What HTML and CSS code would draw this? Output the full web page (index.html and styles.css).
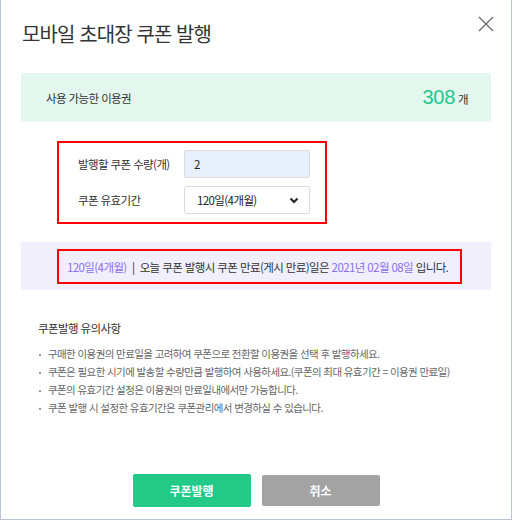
FILE: index.html
```html
<!DOCTYPE html>
<html lang="ko">
<head>
    <meta charset="UTF-8">
    <title>모바일 초대장 쿠폰 발행</title>
    <link rel="stylesheet" href="styles.css">
</head>
<body>

<div class="popup">
    <div class="popup-head">
        <h2>모바일 초대장 쿠폰 발행</h2>
        <button class="btn-close" type="button" aria-label="닫기">
            <svg width="16" height="16" viewBox="0 0 16 16"><path d="M1 1L15 15M15 1L1 15" stroke="#666" stroke-width="1.2" fill="none"/></svg>
        </button>
    </div>

    <div class="ticket-box">
        <span>사용 가능한 이용권</span>
        <span class="ticket-count"><span class="num">308</span> 개</span>
    </div>

    <div class="form-area">
        <div class="form-wrap">
            <div class="form-row">
                <label for="couponCount">발행할 쿠폰 수량(개)</label>
                <input type="text" id="couponCount" class="input-count" value="2">
            </div>
            <div class="form-row">
                <label for="couponPeriod">쿠폰 유효기간</label>
                <div class="select-box">
                    <span id="couponPeriod">120일(4개월)</span>
                    <svg width="10" height="7" viewBox="0 0 10 7"><path d="M1.5 1.5L5 5L8.5 1.5" stroke="#222" stroke-width="2" fill="none"/></svg>
                </div>
            </div>
        </div>
    </div>

    <div class="expire-band">
        <p class="expire-text"><em>120일(4개월)</em>  |  오늘 쿠폰 발행시 쿠폰 만료(게시 만료)일은 <em>2021년 02월 08일</em> 입니다.</p>
    </div>

    <div class="notice">
        <h3>쿠폰발행 유의사항</h3>
        <ul>
            <li>구매한 이용권의 만료일을 고려하여 쿠폰으로 전환할 이용권을 선택 후 발행하세요.</li>
            <li>쿠폰은 필요한 시기에 발송할 수량만큼 발행하여 사용하세요.(쿠폰의 최대 유효기간 = 이용권 만료일)</li>
            <li>쿠폰의 유효기간 설정은 이용권의 만료일내에서만 가능합니다.</li>
            <li>쿠폰 발행 시 설정한 유효기간은 쿠폰관리에서 변경하실 수 있습니다.</li>
        </ul>
    </div>

    <div class="btn-area">
        <button type="button" class="btn btn-green">쿠폰발행</button>
        <button type="button" class="btn btn-gray">취소</button>
    </div>
</div>

</body>
</html>
```

FILE: styles.css
```css
body {
    margin: 0;
    padding: 0;
    background-color: #fff;
    font-family: "Noto Sans CJK KR", "Noto Sans", sans-serif;
    color: #333;
}

.popup {
    box-sizing: border-box;
    width: 512px;
    height: 520px;
    padding: 0 20px;
    border: 1px solid #b9c5d2;
    border-top: none;
    display: flex;
    flex-direction: column;
}

.popup-head {
    display: flex;
    justify-content: space-between;
    align-items: flex-start;
    height: 73px;
}

.popup-head h2 {
    margin: 20px 0 0 1px;
    font-size: 20px;
    font-weight: 400;
    line-height: 28px;
    color: #333;
    letter-spacing: -0.9px;
}

.btn-close {
    margin: 16px -3px 0 0;
    padding: 0;
    border: none;
    background: none;
    width: 16px;
    height: 16px;
}

.ticket-box {
    height: 49px;
    padding: 0 23px 0 25px;
    background-color: #e3f7ef;
    display: flex;
    justify-content: space-between;
    align-items: center;
    font-size: 11.5px;
    letter-spacing: -0.6px;
    color: #333;
}

.ticket-count {
    display: flex;
    align-items: baseline;
    gap: 3px;
}

.ticket-count .num {
    font-family: "Liberation Sans", Arial, sans-serif;
    font-size: 20px;
    font-weight: 400;
    letter-spacing: -0.3px;
    color: #22c789;
}

.form-area {
    padding: 19px 0 0 36px;
    height: 120px;
    box-sizing: border-box;
}

.form-wrap {
    width: 270px;
    height: 83px;
    box-sizing: border-box;
    border: 2px solid #f00;
    padding: 7px 0 0 19px;
    display: flex;
    flex-direction: column;
    gap: 8px;
}

.form-row {
    display: flex;
    align-items: center;
}

.form-row label {
    width: 106px;
    font-size: 11.5px;
    letter-spacing: -0.6px;
    color: #333;
}

.input-count,
.select-box {
    box-sizing: border-box;
    width: 126px;
    height: 28px;
    border: 1px solid #dcdcdc;
    border-radius: 2px;
    font-family: inherit;
    font-size: 11.5px;
    letter-spacing: -0.6px;
    color: #222;
}

.input-count {
    padding: 0 9px;
    background-color: #e8f0fe;
    outline: none;
}

.select-box {
    padding: 0 10px 0 12px;
    display: flex;
    justify-content: space-between;
    align-items: center;
    background-color: #fff;
}

.expire-band {
    background-color: #f1effc;
    height: 48px;
    padding: 7px 0 0 36px;
    box-sizing: border-box;
}

.expire-text {
    margin: 0;
    width: 405px;
    height: 35px;
    box-sizing: border-box;
    border: 2px solid #f00;
    padding-left: 8px;
    display: flex;
    align-items: center;
    white-space: pre;
    font-size: 11.5px;
    letter-spacing: -0.6px;
    color: #333;
}

.expire-text em {
    font-style: normal;
    color: #8c6df2;
}

.notice {
    padding: 29px 0 0 17px;
    height: 184px;
    box-sizing: border-box;
}

.notice h3 {
    margin: 0 0 8px;
    font-size: 11.5px;
    font-weight: 400;
    letter-spacing: -0.6px;
    line-height: 18px;
    color: #333;
}

.notice ul {
    margin: 0;
    padding: 0;
    list-style: none;
}

.notice li {
    position: relative;
    padding-left: 10px;
    font-size: 10.5px;
    line-height: 18px;
    color: #666;
    letter-spacing: -0.6px;
}

.notice li::before {
    content: "";
    position: absolute;
    left: 1px;
    top: 9px;
    width: 2px;
    height: 2px;
    background-color: #999;
}

.btn-area {
    display: flex;
    justify-content: center;
    gap: 11px;
}

.btn {
    width: 118px;
    height: 33px;
    border: none;
    border-radius: 2px;
    color: #fff;
    font-family: inherit;
    font-size: 12px;
    font-weight: 700;
    cursor: pointer;
}

.btn-green {
    background-color: #22c987;
}

.btn-gray {
    background-color: #a3a3a3;
    height: 31px;
    margin-top: 1px;
}
```
